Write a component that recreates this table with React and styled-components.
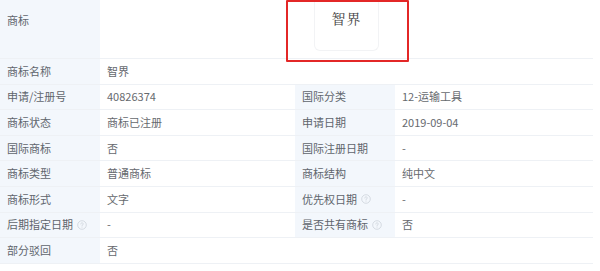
import React from "react";
import styled, { createGlobalStyle } from "styled-components";

const GlobalStyle = createGlobalStyle`
  html, body {
    margin: 0;
    padding: 0;
    background: #fff;
  }
  body {
    font-family: "Noto Sans CJK SC", "Noto Sans", sans-serif;
  }
`;

const rows = [
  { label: "申请/注册号", value: "40826374", label2: "国际分类", value2: "12-运输工具" },
  { label: "商标状态", value: "商标已注册", label2: "申请日期", value2: "2019-09-04" },
  { label: "国际商标", value: "否", label2: "国际注册日期", value2: "-" },
  { label: "商标类型", value: "普通商标", label2: "商标结构", value2: "纯中文" },
  { label: "商标形式", value: "文字", label2: "优先权日期", value2: "-", tip2: true },
  { label: "后期指定日期", value: "-", tip: true, label2: "是否共有商标", value2: "否", tip2: true },
];

function Tip() {
  return (
    <TipIcon viewBox="0 0 10 10" aria-hidden="true">
      <circle cx="5" cy="5" r="4.3" fill="none" stroke="#cdd3da" strokeWidth="0.8" />
      <path d="M3.8 4a1.2 1.2 0 1 1 1.6 1.1c-.3.1-.4.3-.4.6v.3" fill="none" stroke="#cdd3da" strokeWidth="0.8" strokeLinecap="round" />
      <circle cx="5" cy="7.3" r="0.45" fill="#cdd3da" />
    </TipIcon>
  );
}

export default function App() {
  return (
    <>
      <GlobalStyle />
      <Page>
        <Table>
          <Label $tall>商标</Label>
          <Value $span $tall>
            <LogoBox>
              <LogoText>智界</LogoText>
            </LogoBox>
            <Marker />
          </Value>

          <Label>商标名称</Label>
          <Value $span>智界</Value>

          {rows.map((r) => (
            <React.Fragment key={r.label}>
              <Label>
                {r.label}
                {r.tip && <Tip />}
              </Label>
              <Value>{r.value}</Value>
              <Label>
                {r.label2}
                {r.tip2 && <Tip />}
              </Label>
              <Value>{r.value2}</Value>
            </React.Fragment>
          ))}

          <Label>部分驳回</Label>
          <Value $span>否</Value>
        </Table>
      </Page>
    </>
  );
}

const Page = styled.div`
  width: 600px;
  height: 271px;
  overflow: hidden;
  background: #fff;
`;

const Table = styled.div`
  width: 593px;
  display: grid;
  grid-template-columns: 100px 195px 100px 198px;
  grid-template-rows: 59px repeat(8, 25.6px);
  border-right: 1px solid #f1f3f6;
  box-sizing: border-box;
`;

const Cell = styled.div`
  display: flex;
  align-items: center;
  box-sizing: border-box;
  padding: 0 7px;
  font-size: 11px;
  line-height: 1;
  white-space: nowrap;
  border-bottom: 1px solid #eef1f5;
`;

const Label = styled(Cell)`
  background: #f3f7fc;
  color: #60656c;
  gap: 4px;
  align-items: ${(p) => (p.$tall ? "flex-start" : "center")};
  padding-top: ${(p) => (p.$tall ? "15px" : "0")};
`;

const Value = styled(Cell)`
  position: relative;
  background: #fff;
  color: #66696e;
  grid-column: ${(p) => (p.$span ? "span 3" : "auto")};
  justify-content: ${(p) => (p.$tall ? "center" : "flex-start")};
  align-items: ${(p) => (p.$tall ? "flex-start" : "center")};
`;

const TipIcon = styled.svg`
  width: 10px;
  height: 10px;
  flex: none;
`;

const LogoBox = styled.div`
  width: 65px;
  height: 51px;
  box-sizing: border-box;
  border: 1px solid #f2f3f5;
  border-top: none;
  border-radius: 0 0 6px 6px;
  display: flex;
  justify-content: center;
  padding-top: 11px;
`;

const LogoText = styled.span`
  font-family: "Noto Serif CJK SC", "Noto Sans CJK SC", serif;
  font-size: 14px;
  color: #444;
  letter-spacing: 1px;
`;

const Marker = styled.div`
  position: absolute;
  left: 186px;
  top: 0;
  width: 123px;
  height: 62px;
  box-sizing: border-box;
  border: 2px solid #e32727;
  border-radius: 1px;
  pointer-events: none;
  z-index: 1;
`;
